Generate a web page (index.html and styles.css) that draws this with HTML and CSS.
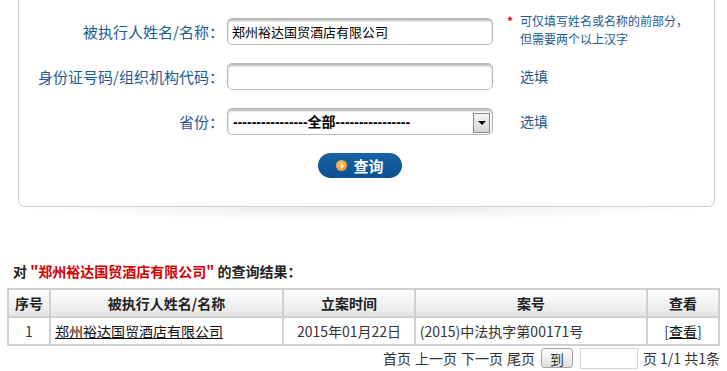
FILE: index.html
```html
<!DOCTYPE html>
<html lang="zh-CN">

<head>
    <meta charset="UTF-8">
    <title>被执行人信息查询</title>
    <link rel="stylesheet" href="styles.css">
</head>

<body>
    <div class="panel">
        <form class="search">
            <label class="label">被执行人姓名/名称：</label>
            <input class="field" type="text" value="郑州裕达国贸酒店有限公司">
            <div class="hint hint-top"><span class="star">*</span>可仅填写姓名或名称的前部分，<br>但需要两个以上汉字</div>

            <label class="label">身份证号码/组织机构代码：</label>
            <input class="field" type="text" value="">
            <div class="hint">选填</div>

            <label class="label">省份：</label>
            <div class="field select-box">
                <select class="select">
                    <option>----------------全部----------------</option>
                </select>
                <span class="arrow"></span>
            </div>
            <div class="hint">选填</div>

            <button class="btn" type="button"><span class="btn-icon"></span>查询</button>
        </form>
    </div>
    <div class="panel-shadow"></div>

    <h3 class="result-title">对 <span class="red">"郑州裕达国贸酒店有限公司"</span> 的查询结果：</h3>

    <table class="result">
        <tr>
            <th class="c1">序号</th>
            <th class="c2">被执行人姓名/名称</th>
            <th class="c3">立案时间</th>
            <th class="c4">案号</th>
            <th class="c5">查看</th>
        </tr>
        <tr>
            <td class="center">1</td>
            <td><a href="#">郑州裕达国贸酒店有限公司</a></td>
            <td class="center">2015年01月22日</td>
            <td>(2015)中法执字第00171号</td>
            <td class="center">[<a href="#">查看</a>]</td>
        </tr>
    </table>

    <div class="pager">
        <span>首页</span>
        <span>上一页</span>
        <span>下一页</span>
        <span>尾页</span>
        <button class="go" type="button">到</button>
        <input class="page-input" type="text">
        <span>页 1/1 共1条</span>
    </div>
</body>

</html>
```

FILE: styles.css
```css
* {
    padding: 0;
    margin: 0;
    box-sizing: border-box;
}

body {
    font-family: "Noto Sans CJK SC", sans-serif;
    font-size: 14px;
    color: #333;
    background: #fff;
}

.panel {
    margin-left: 18px;
    width: 697px;
    border: 1px solid #cfcfcf;
    border-top: none;
    border-radius: 0 0 7px 7px;
    padding: 18px 0 26px 0;
    background: #fff;
}

.search {
    display: grid;
    grid-template-columns: 205px 266px 1fr;
    grid-auto-rows: 27px;
    column-gap: 3px;
    row-gap: 18px;
}

.label {
    text-align: right;
    line-height: 27px;
    font-size: 15px;
    color: #1d5a93;
}

.field {
    width: 266px;
    height: 27px;
    border: 1px solid #b9b9b9;
    border-radius: 5px;
    box-shadow: inset 0 2px 2px rgba(0, 0, 0, 0.28);
    padding: 0 4px;
    font-family: "Noto Sans CJK SC", sans-serif;
    font-size: 13px;
    color: #000;
    background: #fff;
}

.hint {
    padding-left: 24px;
    font-size: 14px;
    line-height: 27px;
    color: #1d5a93;
}

.hint-top {
    font-size: 12px;
    line-height: 18px;
    margin-top: -6px;
    margin-bottom: -3px;
}

.star {
    display: inline-block;
    width: 13px;
    margin-left: -13px;
    color: #d8000c;
    font-weight: bold;
}

.select-box {
    display: flex;
    align-items: center;
    padding: 0 2px 0 5px;
}

.select {
    flex: 1;
    appearance: none;
    -webkit-appearance: none;
    border: none;
    background: transparent;
    font-family: "Liberation Sans", "Noto Sans CJK SC", sans-serif;
    font-size: 14px;
    font-weight: bold;
    color: #000;
    outline: none;
}

.arrow {
    width: 17px;
    height: 20px;
    margin-top: 2px;
    border: 1px solid #8a8a8a;
    background: linear-gradient(#f4f4f4, #d6d6d6);
    display: flex;
    align-items: center;
    justify-content: center;
}

.arrow::after {
    content: "";
    border-left: 4px solid transparent;
    border-right: 4px solid transparent;
    border-top: 4px solid #000;
}

.btn {
    grid-column: 2;
    justify-self: center;
    width: 84px;
    height: 25px;
    border: none;
    border-radius: 13px;
    background: linear-gradient(#1a63a6, #0b4f8e);
    color: #fff;
    font-family: "Noto Sans CJK SC", sans-serif;
    font-size: 15px;
    font-weight: bold;
    display: flex;
    align-items: center;
    justify-content: center;
    gap: 6px;
}

.btn-icon {
    width: 11px;
    height: 11px;
    border-radius: 50%;
    background: radial-gradient(circle at 40% 35%, #ffc266, #ee8a1c);
    display: flex;
    align-items: center;
    justify-content: center;
}

.btn-icon::after {
    content: "";
    margin-left: 1px;
    border-top: 3px solid transparent;
    border-bottom: 3px solid transparent;
    border-left: 3px solid #fff;
}

.panel-shadow {
    margin-left: 18px;
    width: 697px;
    height: 13px;
    background: radial-gradient(ellipse 50% 100% at 50% 0, rgba(0, 0, 0, 0.09), rgba(0, 0, 0, 0) 100%);
}

.result-title {
    margin: 42px 0 8px 13px;
    font-size: 14px;
    line-height: 18px;
    font-weight: bold;
    color: #222;
}

.red {
    color: #d40000;
}

.result {
    margin-left: 7px;
    width: 713px;
    border-collapse: collapse;
    border: 2px solid #cfcfcf;
}

.result th,
.result td {
    border: 2px solid #cfcfcf;
    height: 28px;
    padding: 0 4px;
    font-size: 14px;
}

.result th {
    font-weight: bold;
    color: #222;
    background: linear-gradient(#ffffff, #e4e4e4);
}

.result td {
    color: #333;
}

.result a {
    color: #111;
    text-decoration: underline;
}

.c1 { width: 42px; }
.c2 { width: 234px; }
.c3 { width: 132px; }
.c4 { width: 233px; }
.c5 { width: 72px; }

.center {
    text-align: center;
}

.pager {
    display: flex;
    justify-content: flex-end;
    align-items: center;
    gap: 4px;
    padding-right: 7px;
    margin-top: 1px;
    height: 22px;
    font-size: 14px;
    color: #333;
}

.go {
    width: 32px;
    height: 20px;
    margin: 0 3px 0 2px;
    border: 1px solid #a6a6a6;
    border-radius: 3px;
    background: linear-gradient(#fdfdfd, #dedede);
    font-family: "Noto Sans CJK SC", sans-serif;
    font-size: 14px;
    color: #333;
}

.page-input {
    width: 58px;
    height: 21px;
    border: 1px solid #d6d6d6;
    margin-right: 1px;
}
```
